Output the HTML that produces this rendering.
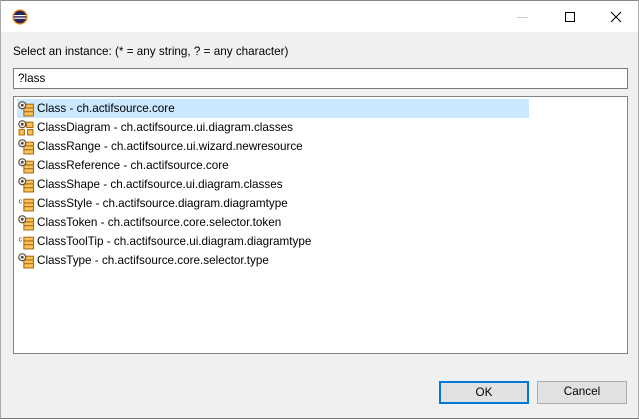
<!DOCTYPE html>
<html><head><meta charset="utf-8"><style>
*{margin:0;padding:0;box-sizing:border-box}
body{width:639px;height:419px;overflow:hidden;background:#f0f0f0;font-family:"Segoe UI","Liberation Sans",sans-serif;font-size:11.7px;color:#000;position:relative}
.title{position:absolute;left:0;top:0;width:639px;height:32px;background:#fff;border-top:1px solid #888}
.win{position:absolute;left:0;top:0;width:639px;height:419px;border-left:1px solid #aaa;border-right:1px solid #aaa;border-bottom:1px solid #777}
.lbl{position:absolute;left:13px;top:45px}
.field{position:absolute;left:13px;top:68px;width:615px;height:21px;background:#fff;border:1px solid #7a7a7a;padding:3px 4px}
.list{position:absolute;left:13px;top:96px;width:615px;height:258px;background:#fff;border:1px solid #828282}
.row{position:absolute;left:3px;height:19px;line-height:20px;padding-left:20px;white-space:nowrap}
.sel{background:#cce8ff;width:512px}
.ic{position:absolute;left:1px;top:2px;width:16px;height:16px}
.btn{position:absolute;top:381px;height:23px;width:90px;background:#e1e1e1;border:1px solid #adadad;text-align:center;line-height:20px}
</style></head><body>
<div class="title">
<svg style="position:absolute;left:12px;top:8px" width="16" height="16" viewBox="0 0 16 16"><circle cx="8" cy="8" r="7" fill="#2c2255"/><circle cx="8" cy="8" r="7" fill="none" stroke="#f7941e" stroke-width="1.3"/><rect x="2" y="6" width="12" height="1.2" fill="#fff"/><rect x="2" y="8.6" width="12" height="1.2" fill="#fff"/></svg>
<div style="position:absolute;left:517px;top:16px;width:11px;height:1px;background:#ccc"></div>
<div style="position:absolute;left:565px;top:11px;width:10px;height:10px;border:1px solid #000"></div>
<svg style="position:absolute;left:610px;top:10px" width="12" height="12"><path d="M1 1L11 11M11 1L1 11" stroke="#000" stroke-width="1"/></svg>
</div>
<div class="win"></div>
<div class="lbl">Select an instance: (* = any string, ? = any character)</div>
<div class="field">?lass</div>
<div class="list">
<div class="row sel" style="top:2px"><svg class="ic" viewBox="0 0 15 15"><rect x="5.5" y="3" width="9" height="11" fill="#f7c35a" stroke="#b06a10"/><path d="M5.5 6.5h9M5.5 10h9" stroke="#b06a10"/><circle cx="4" cy="4" r="3.3" fill="#eee" stroke="#543"/><circle cx="4" cy="4" r="1.3" fill="#543"/></svg>Class - ch.actifsource.core</div>
<div class="row" style="top:21px"><svg class="ic" viewBox="0 0 15 15"><rect x="8" y="2" width="6" height="5" fill="#f7c35a" stroke="#b06a10"/><rect x="1" y="9" width="5" height="5" fill="#f7c35a" stroke="#b06a10"/><rect x="9" y="9" width="5" height="5" fill="#f7c35a" stroke="#b06a10"/><circle cx="4" cy="4" r="3.3" fill="#eee" stroke="#543"/><circle cx="4" cy="4" r="1.3" fill="#543"/></svg>ClassDiagram - ch.actifsource.ui.diagram.classes</div>
<div class="row" style="top:40px"><svg class="ic" viewBox="0 0 15 15"><rect x="5.5" y="3" width="9" height="11" fill="#f7c35a" stroke="#b06a10"/><path d="M5.5 6.5h9M5.5 10h9" stroke="#b06a10"/><circle cx="4" cy="4" r="3.3" fill="#eee" stroke="#543"/><circle cx="4" cy="4" r="1.3" fill="#543"/></svg>ClassRange - ch.actifsource.ui.wizard.newresource</div>
<div class="row" style="top:59px"><svg class="ic" viewBox="0 0 15 15"><rect x="5.5" y="3" width="9" height="11" fill="#f7c35a" stroke="#b06a10"/><path d="M5.5 6.5h9M5.5 10h9" stroke="#b06a10"/><circle cx="4" cy="4" r="3.3" fill="#eee" stroke="#543"/><circle cx="4" cy="4" r="1.3" fill="#543"/></svg>ClassReference - ch.actifsource.core</div>
<div class="row" style="top:78px"><svg class="ic" viewBox="0 0 15 15"><rect x="5.5" y="3" width="9" height="11" fill="#f7c35a" stroke="#b06a10"/><path d="M5.5 6.5h9M5.5 10h9" stroke="#b06a10"/><circle cx="4" cy="4" r="3.3" fill="#eee" stroke="#543"/><circle cx="4" cy="4" r="1.3" fill="#543"/></svg>ClassShape - ch.actifsource.ui.diagram.classes</div>
<div class="row" style="top:97px"><svg class="ic" viewBox="0 0 15 15"><rect x="5.5" y="3" width="9" height="11" fill="#f7c35a" stroke="#b06a10"/><path d="M5.5 6.5h9M5.5 10h9" stroke="#b06a10"/><text x="0.5" y="7" font-size="7" fill="#444">c</text></svg>ClassStyle - ch.actifsource.diagram.diagramtype</div>
<div class="row" style="top:116px"><svg class="ic" viewBox="0 0 15 15"><rect x="5.5" y="3" width="9" height="11" fill="#f7c35a" stroke="#b06a10"/><path d="M5.5 6.5h9M5.5 10h9" stroke="#b06a10"/><circle cx="4" cy="4" r="3.3" fill="#eee" stroke="#543"/><circle cx="4" cy="4" r="1.3" fill="#543"/></svg>ClassToken - ch.actifsource.core.selector.token</div>
<div class="row" style="top:135px"><svg class="ic" viewBox="0 0 15 15"><rect x="5.5" y="3" width="9" height="11" fill="#f7c35a" stroke="#b06a10"/><path d="M5.5 6.5h9M5.5 10h9" stroke="#b06a10"/><text x="0.5" y="7" font-size="7" fill="#444">c</text></svg>ClassToolTip - ch.actifsource.ui.diagram.diagramtype</div>
<div class="row" style="top:154px"><svg class="ic" viewBox="0 0 15 15"><rect x="5.5" y="3" width="9" height="11" fill="#f7c35a" stroke="#b06a10"/><path d="M5.5 6.5h9M5.5 10h9" stroke="#b06a10"/><circle cx="4" cy="4" r="3.3" fill="#eee" stroke="#543"/><circle cx="4" cy="4" r="1.3" fill="#543"/></svg>ClassType - ch.actifsource.core.selector.type</div>
</div>
<div class="btn" style="left:439px;border:2px solid #0078d7;line-height:19px">OK</div>
<div class="btn" style="left:537px">Cancel</div>
</body></html>
